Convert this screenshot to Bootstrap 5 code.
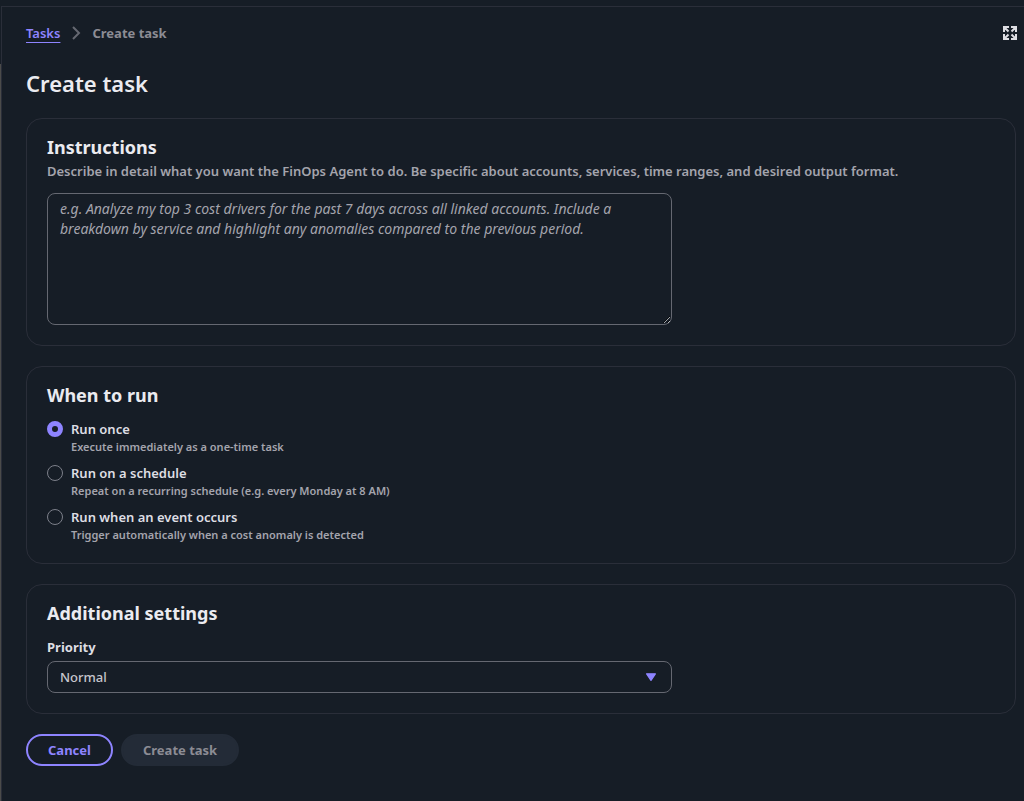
<!DOCTYPE html>
<html lang="en" data-bs-theme="dark">
<head>
<meta charset="utf-8">
<meta name="viewport" content="width=device-width, initial-scale=1">
<title>Create task</title>
<link href="https://cdn.jsdelivr.net/npm/bootstrap@5.3.0/dist/css/bootstrap.min.css" rel="stylesheet">
<style>
  :root {
    --page: #161d26;
    --line: #2a2e39;
    --field-line: #656871;
    --accent: #8e84ff;
    --heading: #ebebf0;
    --body-text: #dedee3;
    --muted: #a4a4ad;
    --faint: #8c8c94;
  }
  body {
    background: var(--page);
    color: var(--body-text);
    font-family: "Noto Sans", "Open Sans", sans-serif;
    font-size: 13px;
    font-weight: 500;
    line-height: 20px;
  }
  .topbar { height: 6px; }
  .rail { width: 1px; margin-top: 58px; background: #4b4b4a; }
  .panel { border: solid var(--line); border-width: 1px 0 0 1px; padding: 16px 8px 24px 24px; }
  .breadcrumb { --bs-breadcrumb-margin-bottom: 0; --bs-breadcrumb-font-size: 13px; gap: 8px; }
  .breadcrumb a { color: var(--accent); text-underline-offset: 4px; font-weight: 600; }
  .breadcrumb .current { color: var(--faint); font-weight: 700; }
  .icon-btn { color: var(--body-text); margin-right: -2px; }
  h1 { font-size: 22px; line-height: 32px; font-weight: 600; color: var(--heading); margin: 24px 0 19px; }
  h2 { font-size: 18px; line-height: 24px; font-weight: 700; color: var(--heading); margin: 0; }
  .card {
    --bs-card-bg: transparent;
    --bs-card-border-color: var(--line);
    --bs-card-border-radius: 16px;
    padding: 16px 20px 20px;
    margin-bottom: 20px;
    color: inherit;
  }
  .card .row { --bs-gutter-x: 20px; }
  .hint { color: var(--muted); font-weight: 600; margin: 2px 0 12px; }
  .form-control, .form-select {
    background-color: var(--page);
    border-color: var(--field-line);
    border-radius: 8px;
    color: var(--body-text);
    font-size: 14px;
    line-height: 20px;
    padding: 5px 12px;
  }
  textarea.form-control { height: 132px; display: block; }
  .form-control::placeholder { color: var(--muted); font-style: italic; }
  .form-select {
    color: #c6c6cd;
    font-size: 13px;
    font-weight: 500;
    background-image: url("data:image/svg+xml,%3Csvg xmlns='http://www.w3.org/2000/svg' viewBox='0 0 16 16'%3E%3Cpath d='M3.600 4.800h8.800L8 11.400z' fill='%238e84ff' stroke='%238e84ff' stroke-width='1.200' stroke-linejoin='round'/%3E%3C/svg%3E");
    background-size: 16px;
    background-position: right 12px center;
  }
  .form-check { padding-left: 24px; margin: 0; min-height: 0; }
  .form-check .form-check-input { width: 16px; height: 16px; margin: 2px 0 0 -24px; background-color: var(--page); border-color: #7d808a; }
  .form-check .form-check-input:checked { border: 5px solid var(--accent); background-image: none; }
  .form-check-label { display: block; font-weight: 600; }
  .choice-note { color: var(--muted); font-size: 11px; line-height: 16px; font-weight: 600; }
  .field-label { font-weight: 700; margin-bottom: 4px; display: block; }
  .pill { font-size: 13px; line-height: 20px; font-weight: 700; border-radius: 20px; border-width: 2px; padding: 4px 20px; }
  .pill-outline { --bs-btn-color: var(--accent); --bs-btn-border-color: var(--accent); --bs-btn-hover-color: #fff; --bs-btn-hover-border-color: #fff; }
  .pill-off { --bs-btn-disabled-color: var(--faint); --bs-btn-disabled-bg: #232b37; --bs-btn-disabled-border-color: #232b37; --bs-btn-disabled-opacity: 1; }
</style>
</head>
<body class="d-flex flex-column min-vh-100">
<div class="topbar"></div>
<div class="d-flex flex-grow-1">
  <div class="rail flex-shrink-0"></div>
  <main class="panel flex-grow-1">
    <div class="d-flex justify-content-between align-items-center">
      <nav aria-label="Breadcrumb">
        <ol class="breadcrumb align-items-center">
          <li><a href="#">Tasks</a></li>
          <li class="d-flex align-items-center gap-2">
            <svg width="16" height="16" viewBox="0 0 16 16" fill="none" stroke="#656871" stroke-width="2" aria-hidden="true"><path d="M5 2l6 6-6 6"/></svg>
            <span class="current" aria-current="page">Create task</span>
          </li>
        </ol>
      </nav>
      <button type="button" class="btn p-0 border-0 d-flex icon-btn" aria-label="Full screen">
        <svg width="16" height="16" viewBox="0 0 16 16" fill="none" stroke="currentColor" stroke-width="2"><path d="M7 2H2v5M2 2l4.500 4.500M9 2h5v5M14 2L9.500 6.500M7 14H2V9M2 14l4.500-4.500M9 14h5V9M14 14L9.500 9.500"/></svg>
      </button>
    </div>
    <h1>Create task</h1>
    <form>
      <section class="card">
        <h2><label for="instructions">Instructions</label></h2>
        <p class="hint" id="instructions-hint">Describe in detail what you want the FinOps Agent to do. Be specific about accounts, services, time ranges, and desired output format.</p>
        <div class="row"><div class="col-8">
          <textarea class="form-control" id="instructions" aria-describedby="instructions-hint" placeholder="e.g. Analyze my top 3 cost drivers for the past 7 days across all linked accounts. Include a breakdown by service and highlight any anomalies compared to the previous period."></textarea>
        </div></div>
      </section>
      <section class="card">
        <h2 id="when">When to run</h2>
        <div class="d-flex flex-column gap-2 mt-2 pt-1" role="radiogroup" aria-labelledby="when">
          <div class="form-check">
            <input class="form-check-input" type="radio" name="run" id="once" checked>
            <label class="form-check-label" for="once">Run once</label>
            <div class="choice-note">Execute immediately as a one-time task</div>
          </div>
          <div class="form-check">
            <input class="form-check-input" type="radio" name="run" id="schedule">
            <label class="form-check-label" for="schedule">Run on a schedule</label>
            <div class="choice-note">Repeat on a recurring schedule (e.g. every Monday at 8 AM)</div>
          </div>
          <div class="form-check">
            <input class="form-check-input" type="radio" name="run" id="event">
            <label class="form-check-label" for="event">Run when an event occurs</label>
            <div class="choice-note">Trigger automatically when a cost anomaly is detected</div>
          </div>
        </div>
      </section>
      <section class="card">
        <h2>Additional settings</h2>
        <div class="row mt-2 pt-1"><div class="col-8">
          <label class="field-label" for="priority">Priority</label>
          <select class="form-select" id="priority"><option>Normal</option></select>
        </div></div>
      </section>
      <div class="d-flex gap-2">
        <button type="button" class="btn pill pill-outline">Cancel</button>
        <button type="submit" class="btn pill pill-off" disabled>Create task</button>
      </div>
    </form>
  </main>
</div>
<script src="https://cdn.jsdelivr.net/npm/bootstrap@5.3.0/dist/js/bootstrap.bundle.min.js"></script>
</body>
</html>
